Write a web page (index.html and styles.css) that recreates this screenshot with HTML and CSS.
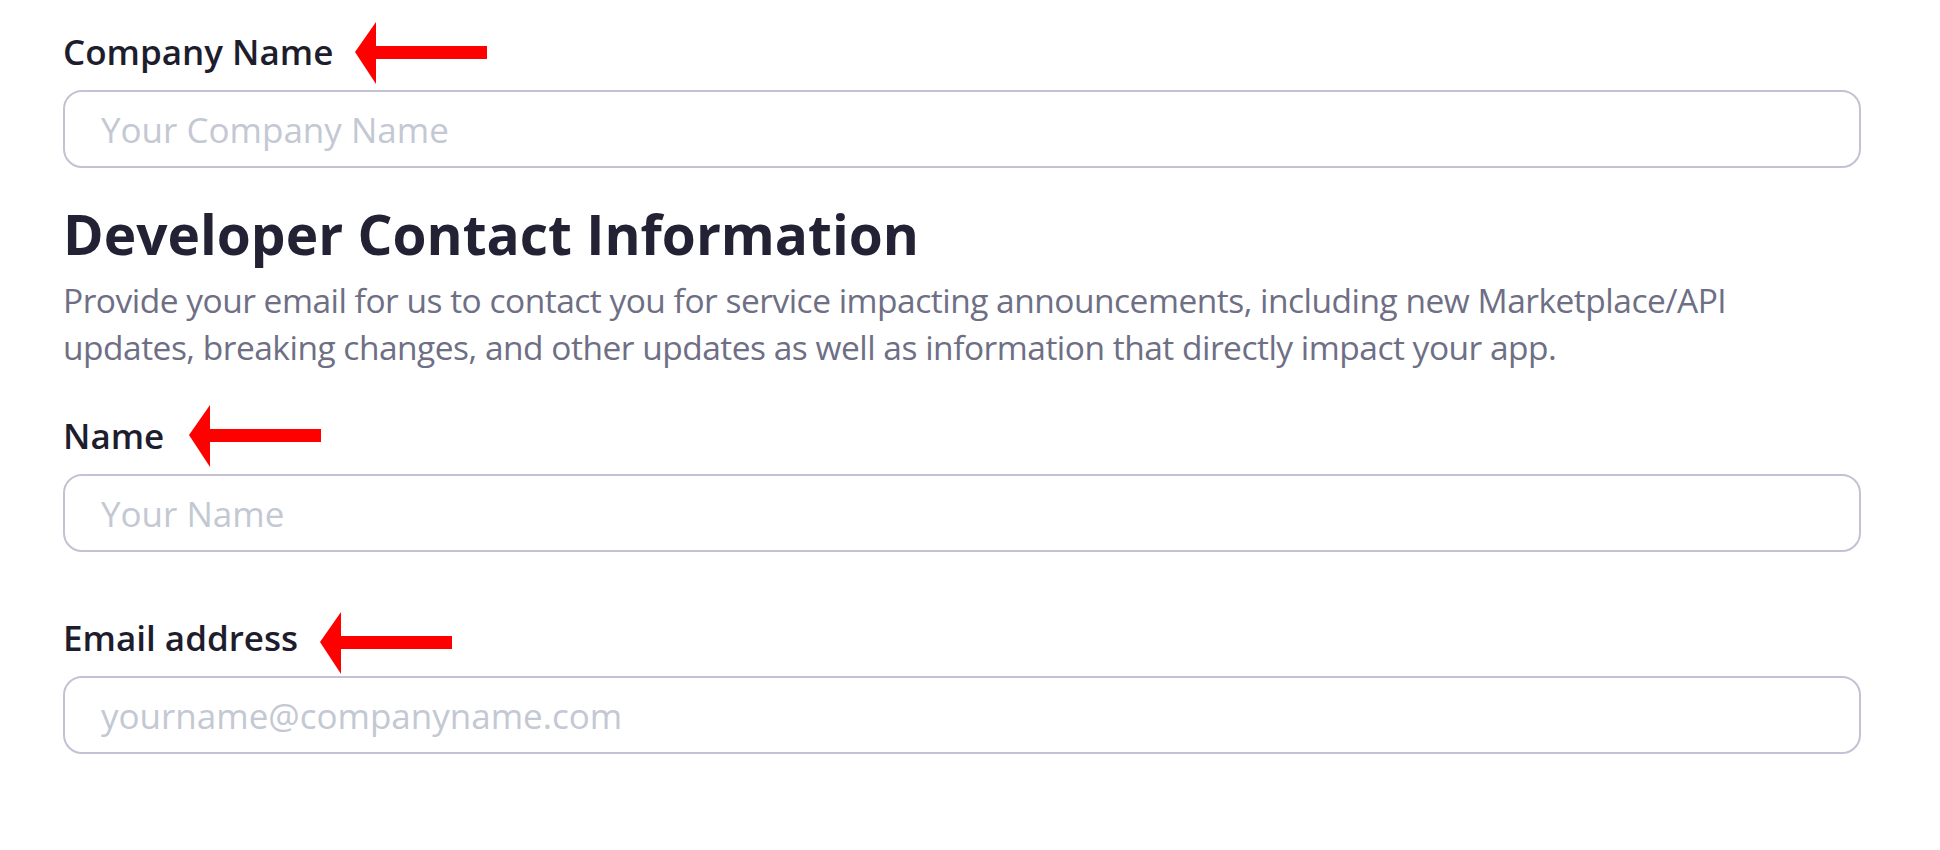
FILE: index.html
```html
<!DOCTYPE html>
<html lang="en">
<head>
<meta charset="utf-8">
<title>Developer Contact Information</title>
<link rel="stylesheet" href="styles.css">
</head>
<body>
<form class="form">
  <div class="field">
    <label class="label" for="company">Company Name<svg class="arrow" viewBox="0 0 132 62" width="132" height="62" aria-hidden="true"><polygon points="0,30 21,0 21,24 132,24 132,37 21,37 21,62" fill="#ff0000"/></svg></label>
    <input class="input" id="company" type="text" placeholder="Your Company Name">
  </div>

  <h2 class="heading">Developer Contact Information</h2>
  <p class="desc">Provide your email for us to contact you for service impacting announcements, including new Marketplace/API updates, breaking changes, and other updates as well as information that directly impact your app.</p>

  <div class="field field-name">
    <label class="label" for="name">Name<svg class="arrow arrow-name" viewBox="0 0 132 62" width="132" height="62" aria-hidden="true"><polygon points="0,30 21,0 21,24 132,24 132,37 21,37 21,62" fill="#ff0000"/></svg></label>
    <input class="input" id="name" type="text" placeholder="Your Name">
  </div>

  <div class="field field-email">
    <label class="label" for="email">Email address<svg class="arrow arrow-email" viewBox="0 0 132 62" width="132" height="62" aria-hidden="true"><polygon points="0,30 21,0 21,24 132,24 132,37 21,37 21,62" fill="#ff0000"/></svg></label>
    <input class="input" id="email" type="email" placeholder="yourname@companyname.com">
  </div>
</form>
</body>
</html>
```

FILE: styles.css
```css
html, body {
  margin: 0;
  padding: 0;
  background: #ffffff;
}

body {
  font-family: "Open Sans", "Noto Sans", sans-serif;
  padding: 27px 0 0 63px;
}

.form {
  width: 1798px;
  display: flex;
  flex-direction: column;
}

.field {
  display: flex;
  flex-direction: column;
  align-items: flex-start;
}

.label {
  position: relative;
  display: inline-block;
  font-size: 35px;
  font-weight: 600;
  line-height: 49px;
  color: #1e1d2d;
  margin-bottom: 14px;
}

.arrow {
  position: absolute;
  left: calc(100% + 22px);
  top: -5px;
}

.arrow-name {
  left: calc(100% + 25px);
  top: -6px;
}

.arrow-email {
  top: -1px;
}

.input {
  box-sizing: border-box;
  width: 100%;
  height: 78px;
  border: 2px solid #c4c1d4;
  border-radius: 19px;
  padding: 0 36px;
  font-family: "Open Sans", "Noto Sans", sans-serif;
  font-size: 35px;
  color: #1e1d2d;
  background: #ffffff;
  outline: none;
}

.input::placeholder {
  color: #c3c8d3;
  opacity: 1;
}

.heading {
  margin: 33px 0 0;
  font-size: 55px;
  font-weight: 700;
  line-height: 66px;
  color: #232234;
}

.desc {
  margin: 10px 0 0;
  font-size: 33.5px;
  font-weight: 400;
  line-height: 47px;
  letter-spacing: -0.5px;
  color: #6e6f85;
}

.field-name {
  margin-top: 40px;
}

.field-email {
  margin-top: 61px;
}
```
